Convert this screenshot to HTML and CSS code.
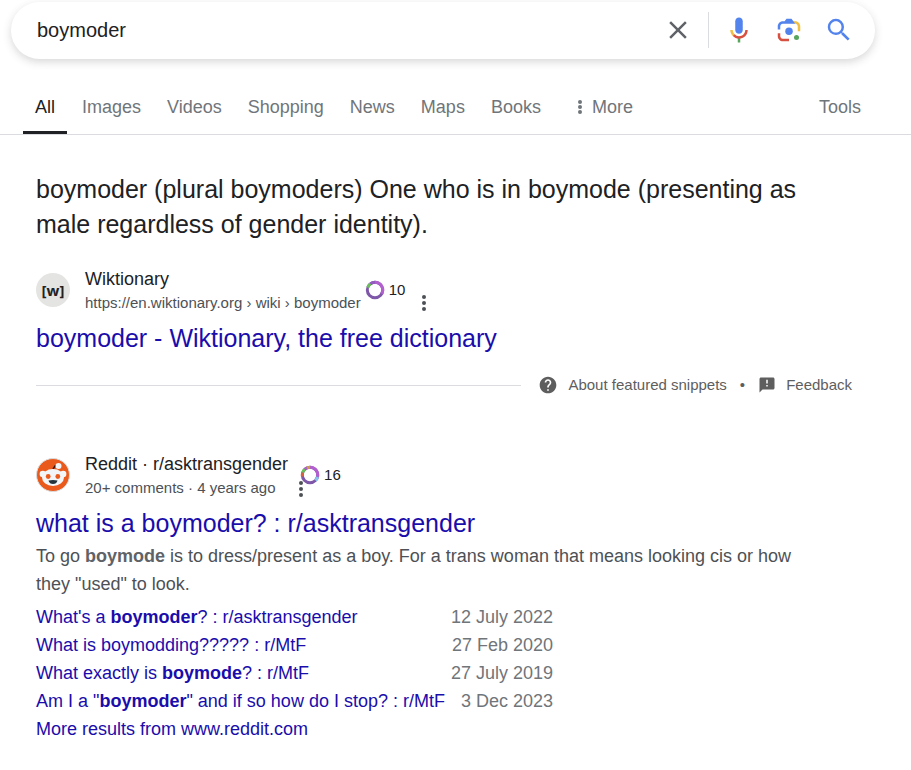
FILE: index.html
```html
<!DOCTYPE html>
<html lang="en-GB">
<head>
<meta charset="utf-8">
<meta name="viewport" content="width=device-width, initial-scale=1">
<title>boymoder - Search</title>
<link rel="stylesheet" href="styles.css">
</head>
<body>
<header>
  <form class="search" role="search">
    <input class="search-input" type="text" value="boymoder" aria-label="Search">
    <button class="icon-button clear" type="button" aria-label="Clear">
      <svg width="30" height="30" viewBox="0 0 24 24" fill="#5f6368"><path d="M19 6.41L17.59 5 12 10.59 6.41 5 5 6.41 10.59 12 5 17.59 6.41 19 12 13.41 17.59 19 19 17.59 13.41 12z"/></svg>
    </button>
    <span class="divider"></span>
    <button class="icon-button" type="button" aria-label="Search by voice">
      <svg width="30" height="30" viewBox="0 0 24 24"><path fill="#5383ec" d="M12 15c1.66 0 3-1.31 3-2.97v-7.02c0-1.66-1.34-3.01-3-3.01s-3 1.34-3 3.01v7.02c0 1.66 1.34 2.97 3 2.97z"/><path fill="#58a55c" d="M11 18.08h2v3.92h-2z"/><path fill="#f1bf42" d="M7.05 16.87c-1.27-1.33-2.05-2.83-2.05-4.87h2c0 1.45.56 2.42 1.47 3.38v.32l-1.15 1.18z"/><path fill="#d85140" d="M12 16.93a4.97 5.25 0 0 1-3.54-1.55l-1.41 1.49c1.26 1.34 3.02 2.13 4.95 2.13 3.87 0 6.99-2.92 6.99-7h-1.99c0 2.92-2.24 4.93-5 4.93z"/></svg>
    </button>
    <button class="icon-button" type="button" aria-label="Search by image">
      <svg width="30" height="30" viewBox="0 0 192 192"><circle fill="#58a55c" cx="144.07" cy="144" r="16"/><circle fill="#5383ec" cx="96.07" cy="104" r="24"/><path fill="#d85140" d="M24 135.2c0 18.11 14.69 32.8 32.8 32.8H96v-16l-40.1-.1c-8.8 0-15.9-8.19-15.9-17.9v-18H24v19.2z"/><path fill="#f1bf42" d="M168 72.8c0-18.11-14.69-32.8-32.8-32.8H116l20 16c8.8 0 16 8.29 16 18v30h16V72.8z"/><path fill="#5383ec" d="M112 24l-32 0L68 40H56.8C38.69 40 24 54.69 24 72.8V92h16V74c0-9.71 7.2-18 16-18h80L124 40 112 24z"/></svg>
    </button>
    <button class="icon-button" type="submit" aria-label="Search">
      <svg width="30" height="30" viewBox="0 0 24 24" fill="#5383ec"><path d="M15.5 14h-.79l-.28-.27A6.471 6.471 0 0 0 16 9.5 6.5 6.5 0 1 0 9.5 16c1.61 0 3.09-.59 4.23-1.57l.27.28v.79l5 4.99L20.49 19l-4.99-5zm-6 0C7.01 14 5 11.99 5 9.5S7.01 5 9.5 5 14 7.01 14 9.5 11.99 14 9.5 14z"/></svg>
    </button>
  </form>
  <nav class="tabs" aria-label="Search filters">
    <a class="tab active" href="#" aria-current="page">All</a>
    <a class="tab" href="#">Images</a>
    <a class="tab" href="#">Videos</a>
    <a class="tab" href="#">Shopping</a>
    <a class="tab" href="#">News</a>
    <a class="tab" href="#">Maps</a>
    <a class="tab" href="#">Books</a>
    <button class="tab more" type="button">
      <svg width="6" height="14" viewBox="0 0 6 14" fill="#70757a"><circle cx="3" cy="2" r="2"/><circle cx="3" cy="7" r="2"/><circle cx="3" cy="12" r="2"/></svg>
      More
    </button>
    <button class="tab tools" type="button">Tools</button>
  </nav>
</header>
<main>
  <section class="snippet">
    <p class="answer">boymoder (plural boymoders) One who is in boymode (presenting as male regardless of gender identity).</p>
    <div class="source">
      <span class="favicon wiki">[w]</span>
      <div class="site">
        <div class="site-name">Wiktionary</div>
        <div class="site-meta">https://en.wiktionary.org › wiki › boymoder</div>
      </div>
      <span class="score">
        <svg width="20" height="20" viewBox="0 0 20 20" fill="none" stroke-width="3"><circle cx="10" cy="10" r="7.7" stroke="#7e57a8"/><path d="M10 2.3A7.7 7.7 0 0 1 16.7 13.8" stroke="#b45fd0"/><path d="M2.8 7.4A7.7 7.7 0 0 1 5.6 3.7" stroke="#6abf5b"/><path d="M5.6 3.7A7.7 7.7 0 0 1 10 2.3" stroke="#955bc0"/></svg>
        10
      </span>
      <button class="kebab" type="button" aria-label="About this result">
        <svg width="6" height="16" viewBox="0 0 6 16" fill="#4d5156"><circle cx="3" cy="2" r="2"/><circle cx="3" cy="8" r="2"/><circle cx="3" cy="14" r="2"/></svg>
      </button>
    </div>
    <h3 class="title"><a href="#">boymoder - Wiktionary, the free dictionary</a></h3>
    <div class="snippet-footer">
      <span class="rule"></span>
      <a href="#">
        <svg width="20" height="20" viewBox="0 0 24 24" fill="#5e5e5e"><path d="M12 2C6.48 2 2 6.48 2 12s4.48 10 10 10 10-4.48 10-10S17.52 2 12 2zm1 17h-2v-2h2v2zm2.07-7.75l-.9.92C13.45 12.9 13 13.5 13 15h-2v-.5c0-1.1.45-2.1 1.17-2.83l1.24-1.26c.37-.36.59-.86.59-1.41 0-1.1-.9-2-2-2s-2 .9-2 2H8c0-2.21 1.79-4 4-4s4 1.79 4 4c0 .88-.36 1.68-.93 2.25z"/></svg>
        About featured snippets
      </a>
      <span class="dot">•</span>
      <a href="#">
        <svg width="18" height="18" viewBox="0 0 24 24" fill="#5e5e5e"><path d="M20 2H4c-1.1 0-1.99.9-1.99 2L2 22l4-4h14c1.1 0 2-.9 2-2V4c0-1.1-.9-2-2-2zm-7 12h-2v-2h2v2zm0-4h-2V5h2v5z"/></svg>
        Feedback
      </a>
    </div>
  </section>
  <article>
    <div class="source">
      <svg class="favicon" width="34" height="34" viewBox="0 0 34 34"><circle cx="17" cy="17" r="16.5" fill="#ea5a1c" stroke="#d9dde0"/><path d="M17 11L19 8 22 7.500" fill="none" stroke="#3a1a10" stroke-width="1.5"/><circle cx="22.5" cy="8" r="3" fill="#f3f6f8"/><circle cx="6.8" cy="16" r="3.2" fill="#f3f6f8"/><circle cx="27.2" cy="16" r="3.2" fill="#f3f6f8"/><ellipse cx="17" cy="19.500" rx="11" ry="8.5" fill="#f3f6f8"/><circle cx="12.2" cy="18.5" r="2.4" fill="#ea5a1c"/><circle cx="21.8" cy="18.5" r="2.4" fill="#ea5a1c"/><path d="M12.500 22.5Q17 21.5 21.500 22.5Q20.500 26 17 26T12.500 22.5z" fill="#23333b"/></svg>
      <div class="site">
        <div class="site-name">Reddit · r/asktransgender</div>
        <div class="site-meta">20+ comments · 4 years ago</div>
      </div>
      <div class="stacked">
        <span class="score">
          <svg width="20" height="20" viewBox="0 0 20 20" fill="none" stroke-width="3"><circle cx="10" cy="10" r="7.7" stroke="#7e57a8"/><path d="M10 2.3A7.7 7.7 0 0 1 17.5 12" stroke="#b45fd0"/><path d="M17.5 12A7.7 7.7 0 0 1 15.5 15.4" stroke="#86c5ee"/><path d="M2.4 11.5A7.7 7.7 0 0 1 2.7 7.5" stroke="#d9603b"/><path d="M2.7 7.5A7.7 7.7 0 0 1 5 4.2" stroke="#6abf5b"/><path d="M5 4.2A7.7 7.7 0 0 1 7 2.9" stroke="#b45fd0"/><path d="M7 2.9A7.7 7.7 0 0 1 10 2.3" stroke="#c9a04a"/></svg>
          16
        </span>
        <button class="kebab" type="button" aria-label="About this result">
          <svg width="6" height="16" viewBox="0 0 6 16" fill="#4d5156"><circle cx="3" cy="2" r="2"/><circle cx="3" cy="8" r="2"/><circle cx="3" cy="14" r="2"/></svg>
        </button>
      </div>
    </div>
    <h3 class="title"><a href="#">what is a boymoder? : r/asktransgender</a></h3>
    <p class="description">To go <em>boymode</em> is to dress/present as a boy. For a trans woman that means looking cis or how they "used" to look.</p>
    <table class="threads">
      <tr><td><a href="#">What's a <b>boymoder</b>? : r/asktransgender</a></td><td>12 July 2022</td></tr>
      <tr><td><a href="#">What is boymodding????? : r/MtF</a></td><td>27 Feb 2020</td></tr>
      <tr><td><a href="#">What exactly is <b>boymode</b>? : r/MtF</a></td><td>27 July 2019</td></tr>
      <tr><td><a href="#">Am I a "<b>boymoder</b>" and if so how do I stop? : r/MtF</a></td><td>3 Dec 2023</td></tr>
    </table>
    <a class="more-results" href="#">More results from www.reddit.com</a>
  </article>
</main>
</body>
</html>
```

FILE: styles.css
```css
* {
  box-sizing: border-box;
}

body {
  margin: 0;
  background: #fff;
  color: #202124;
  font-family: "Liberation Sans", Arial, sans-serif;
  font-size: 18px;
  line-height: 28px;
}

a {
  color: #1a0dab;
  text-decoration: none;
}

button {
  border: 0;
  padding: 0;
  background: none;
  font: inherit;
  color: inherit;
  cursor: pointer;
}

svg {
  display: block;
  flex: none;
}

h3,
p {
  margin: 0;
  font-weight: 400;
}

.search {
  display: flex;
  align-items: center;
  height: 57px;
  margin: 2px 36px 0 11px;
  padding: 0 11px 2px 26px;
  border-radius: 29px;
  background: #fff;
  box-shadow: 0 3px 8px rgba(64, 60, 67, 0.2);
}

.search-input {
  flex: 1;
  min-width: 0;
  border: 0;
  padding: 0;
  outline: 0;
  background: none;
  font: inherit;
  font-size: 20px;
  color: #202124;
}

.icon-button {
  display: grid;
  place-items: center;
  width: 50px;
  height: 50px;
}

.clear {
  width: 60px;
}

.divider {
  width: 1px;
  height: 36px;
  margin-right: 5px;
  background: #dadce0;
}

.tabs {
  display: flex;
  height: 76px;
  padding: 20px 50px 0 23px;
  border-bottom: 1px solid #dadce0;
}

.tab {
  display: flex;
  align-items: center;
  padding: 0 13px;
  color: #70757a;
}

.tab.active {
  color: #202124;
  border-bottom: 3px solid #202124;
  padding: 3px 12px 0;
  margin-right: 2px;
}

.more {
  gap: 9px;
  margin-left: 10px;
}

.tools {
  margin-left: auto;
  padding: 0;
}

main {
  max-width: 852px;
  padding: 37px 0 0 36px;
}

.answer {
  max-width: 780px;
  font-size: 25px;
  line-height: 35px;
}

.source {
  display: flex;
  align-items: center;
  height: 50px;
}

.snippet .source {
  margin-top: 23px;
}

.favicon {
  width: 34px;
  height: 34px;
  margin-right: 15px;
}

.wiki {
  display: grid;
  place-items: center;
  border-radius: 50%;
  background: #e4e4e2;
  color: #222;
  font: 700 15px "Open Sans", sans-serif;
}

.site-name {
  line-height: 26px;
}

.site-meta {
  font-size: 15px;
  line-height: 22px;
  color: #4d5156;
}

.score {
  display: flex;
  align-items: center;
  gap: 4px;
  margin-left: 4px;
  font-size: 15px;
  line-height: 20px;
}

.kebab {
  align-self: flex-end;
  margin: 0 0 4px 16px;
}

.stacked {
  position: relative;
  margin-left: 8px;
}

.stacked .kebab {
  position: absolute;
  top: 16px;
  left: 2px;
  margin: 0;
}

.title {
  font-size: 25px;
  line-height: 32px;
  margin-top: 7px;
}

.snippet-footer {
  display: flex;
  align-items: center;
  margin-top: 21px;
  font-size: 15px;
  line-height: 20px;
  color: #5e5e5e;
}

.snippet-footer a {
  display: flex;
  align-items: center;
  gap: 10px;
  color: inherit;
}

.rule {
  flex: 1;
  height: 1px;
  margin-right: 17px;
  background: #dadce0;
}

.dot {
  margin: 0 13px;
}

article {
  margin-top: 55px;
}

.description {
  max-width: 760px;
  margin-top: 3px;
  color: #4d5156;
}

.description em {
  font-style: normal;
  font-weight: 700;
  color: #5f6368;
}

.threads {
  margin-top: 5px;
  border-collapse: collapse;
}

.threads td {
  padding: 0;
}

.threads td:last-child {
  padding-left: 6px;
  text-align: right;
  color: #70757a;
}

.more-results {
  display: block;
}
```
